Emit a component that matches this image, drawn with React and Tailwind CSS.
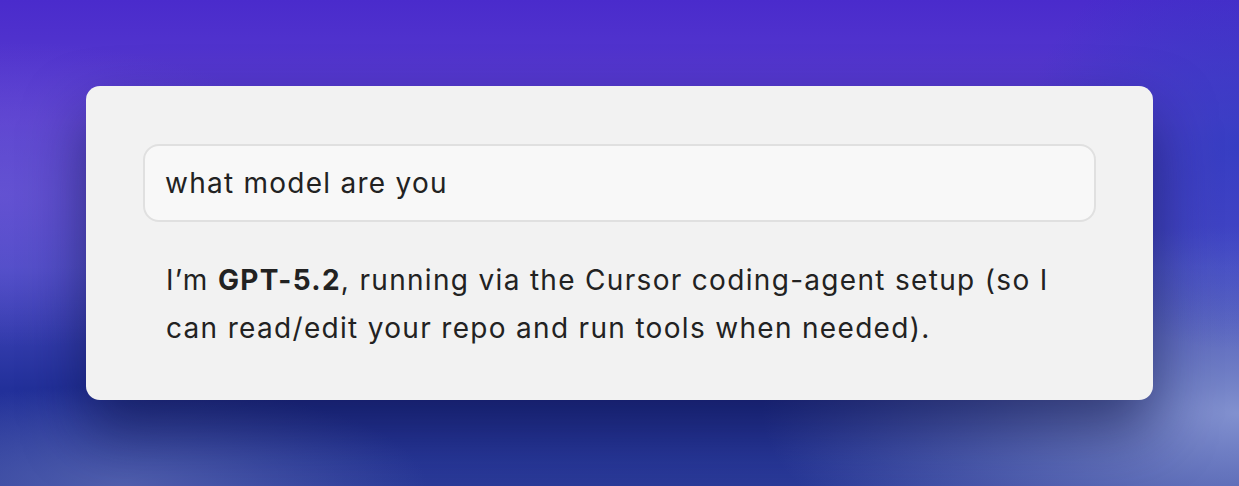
export default function App() {
  return (
    <div className="relative w-[1239px] h-[486px] overflow-hidden">
      <div className="absolute inset-0 bg-[linear-gradient(180deg,#4a2bcc_0%,#5a3fcf_25%,#4a4bc4_55%,#22309a_80%,#2a3a98_100%)]" />
      <div className="absolute inset-0 bg-[radial-gradient(ellipse_55%_55%_at_100%_85%,rgba(135,150,210,0.95),rgba(135,150,210,0)_70%)]" />
      <div className="absolute inset-0 bg-[radial-gradient(ellipse_40%_45%_at_0%_40%,rgba(110,90,215,0.6),rgba(110,90,215,0)_70%)]" />
      <div className="absolute inset-0 bg-[radial-gradient(ellipse_35%_30%_at_10%_100%,rgba(90,105,180,0.8),rgba(90,105,180,0)_70%)]" />
      <div className="absolute inset-0 bg-[radial-gradient(ellipse_25%_60%_at_100%_30%,rgba(40,60,190,0.7),rgba(40,60,190,0)_70%)]" />
      <div className="relative flex w-full h-full pt-[86px] pl-[86px]">
        <div
          className="w-[1067px] h-[314px] rounded-[14px] bg-[#f2f2f2] shadow-[0_30px_60px_rgba(10,15,60,0.55)] pt-[58px] px-[57px] flex flex-col"
          style={{ fontFamily: "Inter, 'Noto Sans', sans-serif" }}
        >
          <div className="h-[78px] rounded-[16px] bg-[#f8f8f8] border-2 border-[#e0e0e0] flex items-center pl-[20px] text-[28px] tracking-[0.045em] text-[#222]">
            what model are you
          </div>
          <div className="mt-[34px] pl-[23px] pr-[10px] text-[28px] tracking-[0.047em] leading-[48px] text-[#222]">
            I’m <span className="font-bold">GPT-5.2</span>, running via the Cursor coding-agent setup (so I can read/edit your repo and run tools when needed).
          </div>
        </div>
      </div>
    </div>
  );
}
